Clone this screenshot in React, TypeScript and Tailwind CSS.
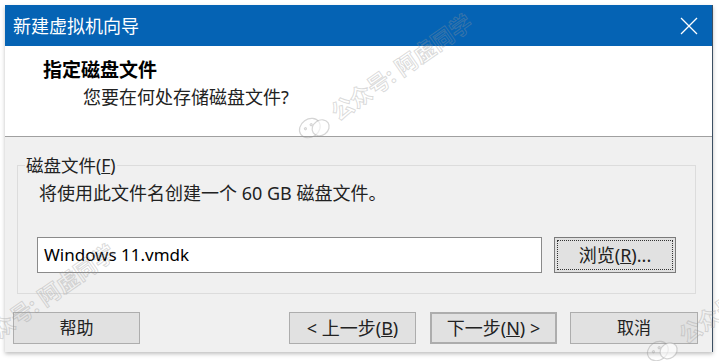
import React from "react";

const font = { fontFamily: '"Noto Sans", "Noto Sans CJK SC", sans-serif' };

function Btn({ children, className = "" }: { children: React.ReactNode; className?: string }) {
  return (
    <div
      className={`h-[32px] flex items-center justify-center bg-[#e1e1e1] border border-[#adadad] text-[17px] text-[#222] ${className}`}
    >
      {children}
    </div>
  );
}

function Watermark({ className = "" }: { className?: string }) {
  return (
    <div
      aria-hidden="true"
      className={`absolute pointer-events-none select-none flex items-center gap-[6px] text-[22px] font-bold text-transparent whitespace-nowrap ${className}`}
      style={{ WebkitTextStroke: "1px rgba(150,150,150,0.35)", ...font }}
    >
      <svg width="34" height="28" viewBox="0 0 34 28" fill="none" stroke="rgba(150,150,150,0.4)" strokeWidth="1.2">
        <ellipse cx="13" cy="11" rx="11" ry="9" />
        <ellipse cx="22" cy="17" rx="9" ry="7.5" fill="rgba(255,255,255,0.6)" />
        <circle cx="9" cy="9" r="1" />
        <circle cx="16" cy="9" r="1" />
      </svg>
      <span>公众号: 阿虚同学</span>
    </div>
  );
}

export default function App() {
  return (
    <div className="w-[719px] h-[361px] bg-white relative overflow-hidden pt-[5px] pl-[5px]" style={font}>
      <div className="w-[708px] h-[347px] flex flex-col border-r border-[#3c4f63] shadow-[0_2px_4px_rgba(0,0,0,0.25)]">
        {/* title bar */}
        <div className="h-[41px] bg-[#0563b4] flex items-center justify-between pl-[8px] pr-[14px] shrink-0">
          <span className="text-white text-[18px] leading-none">新建虚拟机向导</span>
          <svg width="18" height="18" viewBox="0 0 18 18" stroke="white" strokeWidth="1.3">
            <line x1="1" y1="1" x2="17" y2="17" />
            <line x1="17" y1="1" x2="1" y2="17" />
          </svg>
        </div>
        {/* header */}
        <div className="h-[91px] bg-white border-b border-[#a0a0a0] shrink-0 flex flex-col pt-[11px]">
          <div className="pl-[38px] text-[19px] font-bold text-black leading-[26px]">指定磁盘文件</div>
          <div className="pl-[78px] text-[18px] text-[#222] leading-[26px] mt-[1px]">您要在何处存储磁盘文件?</div>
        </div>
        {/* body */}
        <div className="flex-1 bg-[#f0f0f0] flex flex-col">
          <fieldset className="mt-[18px] ml-[12px] mr-[18px] h-[139px] border border-[#dcdcdc] px-[19px]">
            <legend className="ml-[-12px] px-[1px] text-[17.5px] leading-[20px] text-[#222]">
              磁盘文件(<span className="underline">F</span>)
            </legend>
            <div className="mt-[7px] text-[18px] leading-[22px] text-[#222] pl-[2px]">
              将使用此文件名创建一个 60 GB 磁盘文件。
            </div>
            <div className="mt-[33px] flex items-center">
              <div className="w-[505px] h-[36px] bg-white border border-[#8a8a8a] flex items-center pl-[6px] text-[17px] text-black">
                Windows 11.vmdk
              </div>
              <div className="ml-[12px] w-[122px] h-[36px] bg-[#e1e1e1] border border-[#7a7a7a] p-[2px]">
                <div className="w-full h-full border border-dotted border-[#333] flex items-center justify-center text-[18px] text-[#222]">
                  浏览(<span className="underline">R</span>)...
                </div>
              </div>
            </div>
          </fieldset>
          <div className="mt-[18px] flex items-center pl-[8px] pr-[14px]">
            <Btn className="w-[127px]">帮助</Btn>
            <div className="flex-1" />
            <Btn className="w-[127px] text-[18px]">
              &lt; 上一步(<span className="underline">B</span>)
            </Btn>
            <Btn className="w-[127px] ml-[14px] border-2 border-[#0f78c8] text-[18px]">
              下一步(<span className="underline">N</span>) &gt;
            </Btn>
            <Btn className="w-[128px] ml-[13px]">取消</Btn>
          </div>
        </div>
      </div>
      <Watermark className="left-[282px] top-[62px] -rotate-[35deg]" />
      <Watermark className="left-[-75px] top-[292px] -rotate-[35deg]" />
      <Watermark className="left-[630px] top-[285px] -rotate-[35deg]" />
    </div>
  );
}
